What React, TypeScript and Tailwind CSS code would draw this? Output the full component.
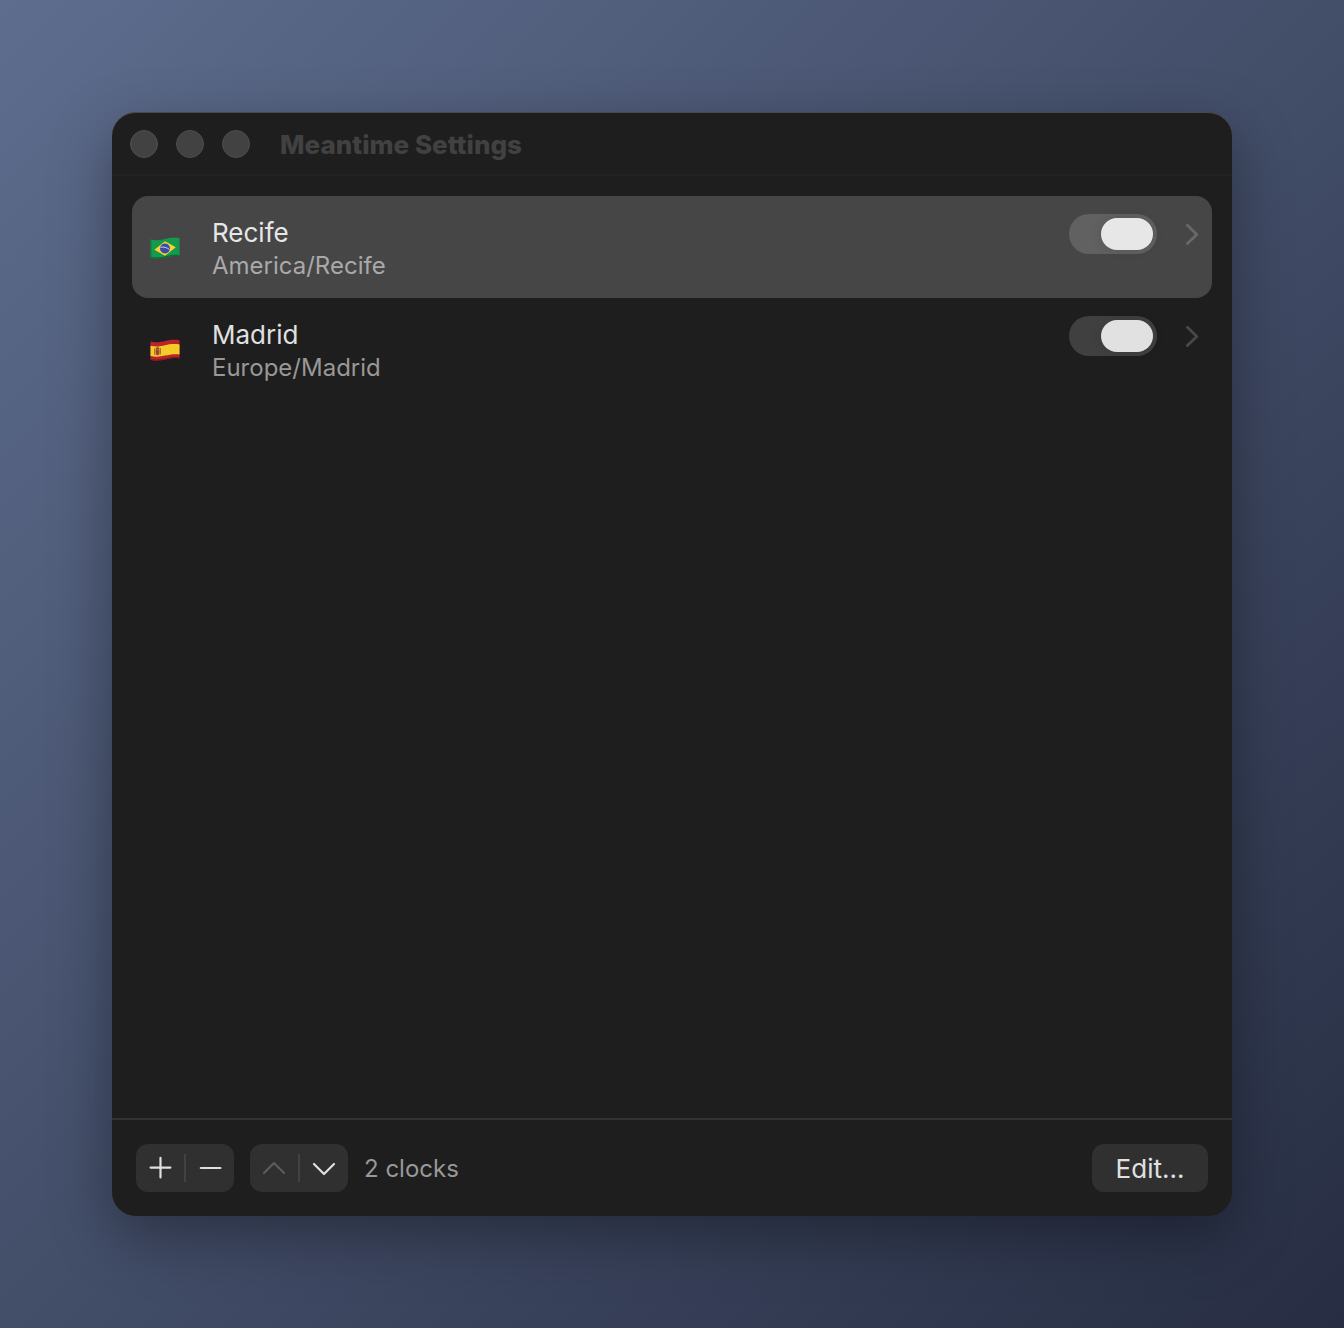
import { useState } from 'react';

interface Clock {
  id: string;
  city: string;
  zone: string;
  enabled: boolean;
}

const initialClocks: Clock[] = [
  { id: 'br', city: 'Recife', zone: 'America/Recife', enabled: true },
  { id: 'es', city: 'Madrid', zone: 'Europe/Madrid', enabled: true },
];

function BrazilFlag() {
  return (
    <svg viewBox="0 0 30 23" className="w-[30px] h-[23px]" role="img" aria-label="Brazil">
      <path d="M.5 2.5C6 4 11 3 15 2S25 .3 29.5 1.3V19.5C25 18.5 20 19.3 15 20.5S6 22 .5 21Z" fill="#149a4d" />
      <path d="M.5 19.7C6 20.8 11 20.2 15 19.2S25 17.2 29.5 18.2V19.5C25 18.5 20 19.3 15 20.5S6 22 .5 21Z" fill="#0b6b35" />
      <path d="M.5 2.5V21l1 .2V2.8Z" fill="#0d7a3c" />
      <path d="M4.4 12.8 15 4.2 25.8 10.2 15 18.8Z" fill="#f6d232" />
      <circle cx="15" cy="11.5" r="5" fill="#3a4ba8" />
      <path d="M10.4 10.3C13.5 9.6 17 10.4 19.6 12.7" fill="none" stroke="#c9d3ea" strokeWidth="1" />
    </svg>
  );
}

function SpainFlag() {
  return (
    <svg viewBox="0 0 30 23" className="w-[30px] h-[23px]" role="img" aria-label="Spain">
      <path d="M.5 2.5C6 4 11 3 15 2S25 .3 29.5 1.3V19.5C25 18.5 20 19.3 15 20.5S6 22 .5 21Z" fill="#b9232b" />
      <path d="M.5 6.7C6 8.2 11 7.2 15 6.2S25 4.5 29.5 5.5V15.6C25 14.6 20 15.4 15 16.6S6 18.1 .5 17.1Z" fill="#f5cb28" />
      <path d="M.5 19.8C6 20.9 11 20.3 15 19.3S25 17.3 29.5 18.3V19.5C25 18.5 20 19.3 15 20.5S6 22 .5 21Z" fill="#8d161d" />
      <path d="M4 9.4h1.2v6.4H4zM9.8 9.1H11v6.4H9.8z" fill="#a8783a" />
      <path d="M5.6 10.4h3.8v4a1.9 1.9 0 0 1-3.8 0Z" fill="#b3462d" />
      <path d="M5.6 9.2 7.5 7.9l1.9 1.2-.3 1.3H5.9Z" fill="#8a4f2a" />
      <circle cx="7.5" cy="12.8" r="1" fill="#5a4a7a" />
    </svg>
  );
}

function ClockRow({ clock, selected, onSelect, onToggle }: {
  clock: Clock;
  selected: boolean;
  onSelect: () => void;
  onToggle: () => void;
}) {
  return (
    <li
      onClick={onSelect}
      className={`flex items-start rounded-2xl pl-[18px] pr-[13px] py-4 ${selected ? 'bg-[#464646]' : ''}`}
    >
      <span className="self-center w-[62px] pt-0.5">
        {clock.id === 'br' ? <BrazilFlag /> : <SpainFlag />}
      </span>
      <div className="flex-1 min-w-0 pt-1">
        <p className={`text-[26px] leading-[34px] ${selected ? 'text-[#e6e6e6]' : 'text-[#e0e0e0]'}`}>{clock.city}</p>
        <p className={`text-2xl leading-8 ${selected ? 'text-[#a9a9a9]' : 'text-[#989898]'}`}>{clock.zone}</p>
      </div>
      <input
        type="checkbox"
        role="switch"
        aria-label={`Show ${clock.city}`}
        checked={clock.enabled}
        onChange={onToggle}
        className={`appearance-none shrink-0 mt-0.5 w-[88px] h-10 p-1 rounded-full before:block before:w-[52px] before:h-8 before:rounded-full before:shadow-[0_0_12px_rgba(0,0,0,0.12)] checked:before:ml-7 ${
          selected ? 'bg-[#616161] before:bg-[#e7e7e7]' : 'bg-[#404040] before:bg-[#e1e1e1]'
        }`}
      />
      <button
        aria-label={`Open ${clock.city}`}
        className={`ml-7 mt-0.5 w-3.5 h-10 flex items-center justify-center ${selected ? 'text-[#686868]' : 'text-[#484848]'}`}
      >
        <svg viewBox="0 0 14 22" className="w-3.5 h-[22px]" fill="none" stroke="currentColor" strokeWidth="2.8" strokeLinecap="round" strokeLinejoin="round">
          <path d="M2.4 2.2 11.8 11.4 2.4 20.6" />
        </svg>
      </button>
    </li>
  );
}

export default function App() {
  const [clocks, setClocks] = useState(initialClocks);
  const [selectedId, setSelectedId] = useState('br');

  const toggle = (id: string) =>
    setClocks(clocks.map((c) => (c.id === id ? { ...c, enabled: !c.enabled } : c)));

  return (
    <div className="min-h-screen flex p-28 font-['Inter',sans-serif] bg-linear-to-br from-[#5e6d8e] via-[#434e69] to-[#272e43]">
      <main className="flex-1 flex flex-col rounded-3xl overflow-hidden bg-[#1e1e1e] border-t border-[#484848] shadow-[0_20px_60px_rgba(0,0,0,0.35)]">
        <header className="flex items-center h-[63px] pl-[18px] border-b-2 border-[#232323]">
          <div className="flex gap-[18px]">
            <button aria-label="Close" className="size-7 rounded-full bg-[#424242] border border-[#4e4e4e]" />
            <button aria-label="Minimize" className="size-7 rounded-full bg-[#424242] border border-[#4e4e4e]" />
            <button aria-label="Zoom" className="size-7 rounded-full bg-[#424242] border border-[#4e4e4e]" />
          </div>
          <h1 className="ml-[30px] pt-0.5 text-[26px] leading-8 font-extrabold text-[#414141]">Meantime Settings</h1>
        </header>

        <ul className="flex-1 p-5">
          {clocks.map((clock) => (
            <ClockRow
              key={clock.id}
              clock={clock}
              selected={clock.id === selectedId}
              onSelect={() => setSelectedId(clock.id)}
              onToggle={() => toggle(clock.id)}
            />
          ))}
        </ul>

        <footer className="flex items-center gap-4 p-6 border-t-2 border-[#323232]">
          <div className="flex items-center h-12 rounded-xl bg-[#303030] text-[#e0e0e0]">
            <button aria-label="Add clock" className="w-12 h-12 flex items-center justify-center">
              <svg viewBox="0 0 24 24" className="size-6" fill="none" stroke="currentColor" strokeWidth="2.2" strokeLinecap="round">
                <path d="M2.6 11.6H22.4M12.5 1.8V21.4" />
              </svg>
            </button>
            <span className="w-0.5 h-7 bg-[#424242]" />
            <button aria-label="Remove clock" className="w-12 h-12 flex items-center justify-center">
              <svg viewBox="0 0 24 24" className="size-6" fill="none" stroke="currentColor" strokeWidth="2.2" strokeLinecap="round">
                <path d="M2.8 12H22.4" />
              </svg>
            </button>
          </div>
          <div className="flex items-center h-12 rounded-xl bg-[#303030] text-[#e0e0e0]">
            <button aria-label="Move up" disabled className="w-12 h-12 flex items-center justify-center text-[#5c5c5c]">
              <svg viewBox="0 0 24 24" className="size-6" fill="none" stroke="currentColor" strokeWidth="2.2" strokeLinecap="round" strokeLinejoin="round">
                <path d="M2 17 12 7 22 17" />
              </svg>
            </button>
            <span className="w-0.5 h-7 bg-[#424242]" />
            <button aria-label="Move down" className="w-12 h-12 flex items-center justify-center">
              <svg viewBox="0 0 24 24" className="size-6" fill="none" stroke="currentColor" strokeWidth="2.2" strokeLinecap="round" strokeLinejoin="round">
                <path d="M2 8 12 18 22 8" />
              </svg>
            </button>
          </div>
          <span className="flex-1 pt-0.5 text-2xl leading-8 text-[#989898]">{clocks.length} clocks</span>
          <button className="w-[116px] h-12 pt-0.5 rounded-xl bg-[#303030] text-[26px] leading-8 text-[#e0e0e0]">Edit…</button>
        </footer>
      </main>
    </div>
  );
}
